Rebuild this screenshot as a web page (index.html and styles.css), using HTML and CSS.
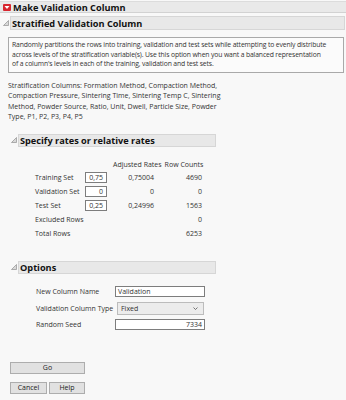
FILE: index.html
```html
<!DOCTYPE html>
<html>
<head>
<meta charset="utf-8">
<link rel="stylesheet" href="styles.css">
</head>
<body>
<div class="window">
  <div class="top-hdr">
    <svg class="hotspot" width="8" height="7" viewBox="0 0 8 7"><rect x="0" y="0" width="8" height="7" rx="1" fill="#d8262f"/><polygon points="1.5,2 6.5,2 4,5" fill="#fff"/></svg>
    <span>Make Validation Column</span>
  </div>
  <div class="outline sub">
    <svg class="grip" width="6" height="6" viewBox="0 0 6 6"><polygon points="5.5,0.5 5.5,5.5 0.5,5.5" fill="#d9d9d9" stroke="#9a9a9a" stroke-width="0.8"/></svg>
    <div class="bar">Stratified Validation Column</div>
  </div>
  <div class="content">
    <div class="desc">Randomly partitions the rows into training, validation and test sets while attempting to evenly distribute across levels of the stratification variable(s). Use this option when you want a balanced representation<br>of a column's levels in each of the training, validation and test sets.</div>
    <p class="strat">Stratification Columns: Formation Method, Compaction Method, Compaction Pressure, Sintering Time, Sintering Temp C, Sintering Method, Powder Source, Ratio, Unit, Dwell, Particle Size, Powder Type, P1, P2, P3, P4, P5</p>

    <div class="panel">
      <div class="outline">
        <svg class="grip" width="6" height="6" viewBox="0 0 6 6"><polygon points="5.5,0.5 5.5,5.5 0.5,5.5" fill="#d9d9d9" stroke="#9a9a9a" stroke-width="0.8"/></svg>
        <div class="bar">Specify rates or relative rates</div>
      </div>
      <div class="rates">
        <div class="rh"><span class="h-adj">Adjusted Rates</span><span class="h-rc">Row Counts</span></div>
        <div class="lbl">Training Set</div><div class="inp num">0,75</div><div class="val">0,75004</div><div class="val">4690</div>
        <div class="lbl">Validation Set</div><div class="inp num">0</div><div class="val">0</div><div class="val">0</div>
        <div class="lbl">Test Set</div><div class="inp num">0,25</div><div class="val">0,24996</div><div class="val">1563</div>
        <div class="lbl">Excluded Rows</div><div></div><div></div><div class="val">0</div>
        <div class="lbl">Total Rows</div><div></div><div></div><div class="val">6253</div>
      </div>
    </div>

    <div class="panel opts">
      <div class="outline">
        <svg class="grip" width="6" height="6" viewBox="0 0 6 6"><polygon points="5.5,0.5 5.5,5.5 0.5,5.5" fill="#d9d9d9" stroke="#9a9a9a" stroke-width="0.8"/></svg>
        <div class="bar">Options</div>
      </div>
      <div class="options">
        <div class="lbl">New Column Name</div><div class="field">Validation</div>
        <div class="lbl">Validation Column Type</div><div class="select"><span>Fixed</span><svg width="5" height="3" viewBox="0 0 5 3"><polyline points="0.5,0.5 2.5,2.5 4.5,0.5" fill="none" stroke="#555" stroke-width="0.8"/></svg></div>
        <div class="lbl">Random Seed</div><div class="field num">7334</div>
      </div>
    </div>

    <div class="buttons">
      <div class="btn go">Go</div>
      <div class="btn-row"><div class="btn cancel">Cancel</div><div class="btn help">Help</div></div>
    </div>
  </div>
  <div class="footer-line"></div>
</div>
</body>
</html>
```
FILE: styles.css
```css
html, body {
  margin: 0;
  padding: 0;
  background: #f8f8f8;
}
body {
  font-family: "Open Sans", Lato, sans-serif;
  font-size: 7px;
  color: #333;
}
.window {
  width: 346px;
  height: 400px;
  overflow: hidden;
}
.top-hdr {
  margin-top: 1px;
  height: 12px;
  background: #e9e9e9;
  border-top: 1px solid #dcdcdc;
  border-bottom: 1px solid #d2d2d2;
  box-sizing: border-box;
  display: flex;
  align-items: center;
  padding-left: 3px;
  gap: 2px;
  font-weight: bold;
  font-size: 9.2px;
  color: #111;
}
.hotspot { display: block; }
.outline {
  display: flex;
  align-items: center;
}
.outline .grip {
  display: block;
  flex: none;
  margin-right: 1px;
}
.bar {
  flex: 1;
  background: #e8e8e8;
  border: 1px solid #d6d6d6;
  height: 13px;
  box-sizing: border-box;
  font-weight: bold;
  font-size: 9.2px;
  color: #111;
  display: flex;
  align-items: center;
  padding-left: 1px;
}
.outline.sub {
  margin-top: 3px;
  padding-left: 3px;
  padding-right: 1px;
}
.outline.sub .bar { height: 14px; }
.content {
  padding-left: 8px;
  padding-right: 2px;
}
.desc {
  margin-top: 7px;
  border: 1px solid #a9a9a9;
  background: #fbfbfb;
  padding: 2px 4px 3px 3px;
  line-height: 9.5px;
  font-size: 6.8px;
  letter-spacing: -0.13px;
  color: #333;
}
.strat {
  margin: 8px 0 0 0;
  width: 220px;
  line-height: 10.5px;
  font-size: 7px;
}
.panel {
  margin-left: 3px;
  width: 205px;
}
.panel > .outline { margin-top: 11px; }
.panel.opts > .outline { margin-top: 20px; }
.rates {
  margin-top: 12px;
  margin-left: 24px;
  display: grid;
  grid-template-columns: 50px 22px 47px 48px;
  grid-template-rows: 12px repeat(5, 14px);
  align-items: center;
}
.rh {
  grid-column: 3 / 5;
  display: flex;
  padding-left: 6px;
  gap: 3px;
  white-space: nowrap;
}
.lbl { white-space: nowrap; }
.inp {
  height: 11px;
  box-sizing: border-box;
  border: 1px solid #7d7d7d;
  background: #fff;
  display: flex;
  align-items: center;
  justify-content: flex-end;
  padding-right: 3px;
}
.val { text-align: right; }
.options {
  margin-top: 10px;
  margin-left: 25px;
  display: grid;
  grid-template-columns: 79px 90px;
  grid-template-rows: 16px 17px 16px;
  align-items: center;
}
.field {
  height: 11px;
  box-sizing: border-box;
  border: 1px solid #7d7d7d;
  background: #fff;
  display: flex;
  align-items: center;
  padding-left: 2px;
}
.field.num { justify-content: flex-end; padding-right: 2px; }
.select {
  margin-left: 2px;
  margin-right: 1px;
  height: 13px;
  box-sizing: border-box;
  border: 1px solid #bcbcbc;
  background: #ececec;
  display: flex;
  align-items: center;
  justify-content: space-between;
  padding: 0 5px 0 3px;
}
.select svg { display: block; }
.buttons {
  margin-top: 29px;
  margin-left: 2px;
  display: flex;
  flex-direction: column;
  gap: 8px;
  width: 75px;
}
.btn {
  height: 12px;
  box-sizing: border-box;
  border: 1px solid #adadad;
  background: #e1e1e1;
  display: flex;
  align-items: center;
  justify-content: center;
  color: #222;
}
.btn-row {
  display: flex;
  gap: 2px;
}
.btn.cancel { width: 37px; }
.btn.help { width: 36px; }
.footer-line {
  margin-top: 10px;
  border-top: 1px solid #cfcfcf;
}
```
